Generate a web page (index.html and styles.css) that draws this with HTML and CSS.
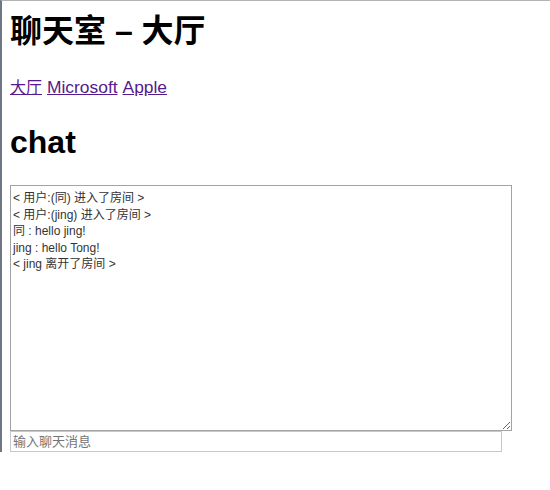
FILE: index.html
```html
<!DOCTYPE html>
<html lang="zh">
<head>
<meta charset="utf-8">
<title>聊天室</title>
<link rel="stylesheet" href="styles.css">
</head>
<body>
<h1 class="title">聊天室 – 大厅</h1>
<div class="nav"><a class="cjk" href="#">大厅</a> <a href="#">Microsoft</a> <a href="#">Apple</a></div>
<h1 class="room">chat</h1>
<textarea class="log" readonly>&lt; 用户:(同) 进入了房间 &gt;
&lt; 用户:(jing) 进入了房间 &gt;
同 : hello jing!
jing : hello Tong!
&lt; jing 离开了房间 &gt;</textarea>
<input class="msg" type="text" placeholder="输入聊天消息">
</body>
</html>
```
FILE: styles.css
```css
html {
  border-left: 2px solid #6f7784;
  border-top: 1px solid #b4b4b4;
  background: #fff;
}
body {
  margin: 0 0 0 8px;
  padding-top: 12px;
  font-family: "Liberation Sans", "Noto Sans CJK SC", sans-serif;
  color: #000;
}
.title {
  margin: 0 0 28px;
  font-size: 32px;
  line-height: 37px;
  font-weight: bold;
}
.nav {
  display: flex;
  align-items: baseline;
  gap: 5px;
  height: 18px;
  font-size: 17.4px;
  line-height: 18px;
  margin: 0 0 28px;
}
.nav a {
  color: #551a8b;
}
.nav .cjk {
  font-size: 16px;
}
.room {
  margin: 0 0 24px;
  font-size: 32px;
  line-height: 37px;
  font-weight: bold;
}
.log {
  display: block;
  box-sizing: border-box;
  width: 502px;
  height: 246px;
  margin: 0;
  padding: 4px 2px 2px;
  border: 1px solid #a3a3a3;
  font-family: "Liberation Sans", "Noto Sans CJK SC", sans-serif;
  font-size: 12px;
  line-height: 16.5px;
  color: #333;
  resize: both;
  outline: none;
}
.msg {
  display: block;
  box-sizing: border-box;
  width: 492px;
  height: 21px;
  margin: 0;
  padding: 0 2px;
  border: 1px solid #c8c8c8;
  font-family: "Liberation Sans", "Noto Sans CJK SC", sans-serif;
  font-size: 13px;
  outline: none;
}
.msg::placeholder {
  color: #757575;
}
```
